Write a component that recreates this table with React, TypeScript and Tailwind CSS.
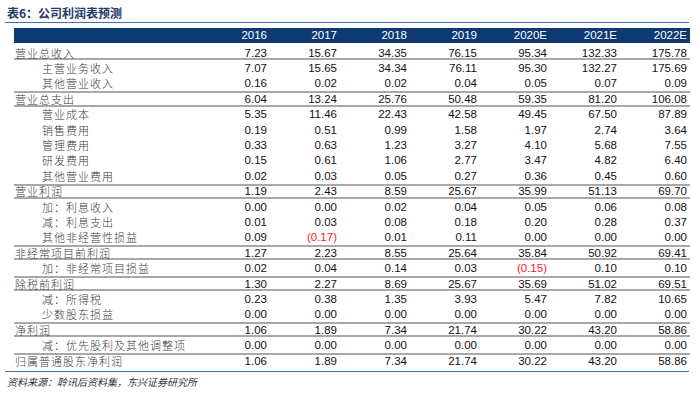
import React from "react";

type Row = { label: string; major?: boolean; vals: string[] };

const rows: Row[] = [
  { label: "营业总收入", major: true, vals: ["7.23", "15.67", "34.35", "76.15", "95.34", "132.33", "175.78"] },
  { label: "主营业务收入", vals: ["7.07", "15.65", "34.34", "76.11", "95.30", "132.27", "175.69"] },
  { label: "其他营业收入", vals: ["0.16", "0.02", "0.02", "0.04", "0.05", "0.07", "0.09"] },
  { label: "营业总支出", major: true, vals: ["6.04", "13.24", "25.76", "50.48", "59.35", "81.20", "106.08"] },
  { label: "营业成本", vals: ["5.35", "11.46", "22.43", "42.58", "49.45", "67.50", "87.89"] },
  { label: "销售费用", vals: ["0.19", "0.51", "0.99", "1.58", "1.97", "2.74", "3.64"] },
  { label: "管理费用", vals: ["0.33", "0.63", "1.23", "3.27", "4.10", "5.68", "7.55"] },
  { label: "研发费用", vals: ["0.15", "0.61", "1.06", "2.77", "3.47", "4.82", "6.40"] },
  { label: "其他营业费用", vals: ["0.02", "0.03", "0.05", "0.27", "0.36", "0.45", "0.60"] },
  { label: "营业利润", major: true, vals: ["1.19", "2.43", "8.59", "25.67", "35.99", "51.13", "69.70"] },
  { label: "加：利息收入", vals: ["0.00", "0.00", "0.02", "0.04", "0.05", "0.06", "0.08"] },
  { label: "减：利息支出", vals: ["0.01", "0.03", "0.08", "0.18", "0.20", "0.28", "0.37"] },
  { label: "其他非经营性损益", vals: ["0.09", "(0.17)", "0.01", "0.11", "0.00", "0.00", "0.00"] },
  { label: "非经常项目前利润", major: true, vals: ["1.27", "2.23", "8.55", "25.64", "35.84", "50.92", "69.41"] },
  { label: "加：非经常项目损益", vals: ["0.02", "0.04", "0.14", "0.03", "(0.15)", "0.10", "0.10"] },
  { label: "除税前利润", major: true, vals: ["1.30", "2.27", "8.69", "25.67", "35.69", "51.02", "69.51"] },
  { label: "减：所得税", vals: ["0.23", "0.38", "1.35", "3.93", "5.47", "7.82", "10.65"] },
  { label: "少数股东损益", vals: ["0.00", "0.00", "0.00", "0.00", "0.00", "0.00", "0.00"] },
  { label: "净利润", major: true, vals: ["1.06", "1.89", "7.34", "21.74", "30.22", "43.20", "58.86"] },
  { label: "减：优先股利及其他调整项", vals: ["0.00", "0.00", "0.00", "0.00", "0.00", "0.00", "0.00"] },
  { label: "归属普通股东净利润", major: true, vals: ["1.06", "1.89", "7.34", "21.74", "30.22", "43.20", "58.86"] },
];

const years = ["2016", "2017", "2018", "2019", "2020E", "2021E", "2022E"];

export default function App() {
  return (
    <div className="w-[700px] h-[406px] bg-white overflow-hidden font-['Liberation_Sans',Arial,sans-serif]">
      <div className="pl-[7px] pt-[5px] h-[22px] text-[12px] leading-[16px] font-bold text-[#1f3a68] font-['Noto_Sans_CJK_SC',sans-serif]">
        表6：公司利润表预测
      </div>
      <div className="ml-[5px] w-[684px] h-px bg-[#3a74b0]" />
      <div className="ml-[14px] w-[676px] mt-[5px]">
        <div className="flex h-[15px] items-center bg-[#0e3a73] text-white text-[11.5px]">
          <div className="w-[186px]" />
          {years.map((y) => (
            <div key={y} className="w-[70px] text-right pr-[3px] leading-[15px]">
              {y}
            </div>
          ))}
        </div>
        <div className="mt-[2px]">
          {rows.map((r, i) => {
            const border = r.major
              ? i === 0
                ? "border-b-2 border-t-2 border-t-transparent border-b-[#a8a8a8]"
                : i === rows.length - 1
                ? "border-t-2 border-b-2 border-t-[#a8a8a8] border-b-transparent"
                : "border-y-2 border-[#a8a8a8]"
              : "";
            return (
              <div key={i} className={`flex h-[15.4px] items-center ${border}`}>
                <div
                  className={`w-[186px] text-[11px] leading-[12px] tracking-[1px] font-light text-[#3a3a3a] font-['Noto_Sans_CJK_SC',sans-serif] whitespace-nowrap ${
                    r.major ? "pl-[1px]" : "pl-[28px]"
                  }`}
                >
                  {r.label}
                </div>
                {r.vals.map((v, j) => (
                  <div
                    key={j}
                    className={`w-[70px] text-right pr-[3px] text-[11.5px] leading-[12px] ${
                      v.startsWith("(") ? "text-[#ff1a1a]" : "text-[#111]"
                    }`}
                  >
                    {v}
                  </div>
                ))}
              </div>
            );
          })}
        </div>
      </div>
      <div className="ml-[5px] w-[684px] h-px bg-[#3a74b0] mt-[3px]" />
      <div className="pl-[7px] mt-[3px] text-[10px] leading-[14px] italic text-[#333] font-['Noto_Sans_CJK_SC',sans-serif]">
        资料来源：聆讯后资料集，东兴证券研究所
      </div>
    </div>
  );
}
